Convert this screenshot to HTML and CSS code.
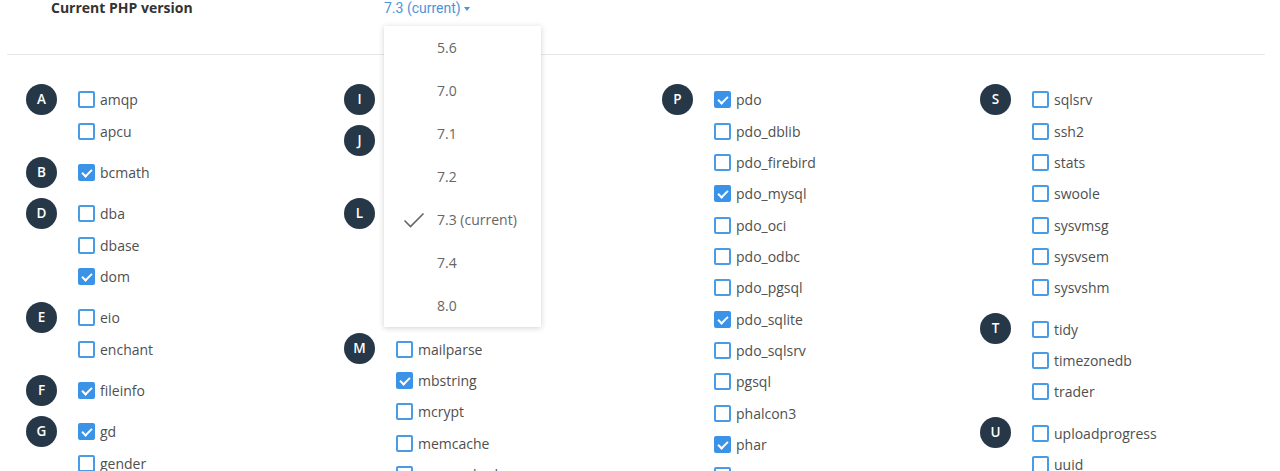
FILE: index.html
```html
<!DOCTYPE html>
<html lang="en">
<head>
    <meta charset="UTF-8">
    <title>PHP Selector - Extensions</title>
    <link rel="stylesheet" href="styles.css">
</head>
<body>
    <div class="version-row">
        <div class="version-label">Current PHP version</div>
        <div class="version-value">
            <span class="version-toggle">7.3 (current)<span class="caret"></span></span>
            <ul class="version-menu">
                <li>5.6</li>
                <li>7.0</li>
                <li>7.1</li>
                <li>7.2</li>
                <li class="selected">
                    <svg class="tick" width="22" height="16" viewBox="0 0 22 16"><path d="M1.5 8.5 L7.5 14.5 L20.5 1.5" fill="none" stroke="#666" stroke-width="1.6"/></svg>
                    7.3 (current)
                </li>
                <li>7.4</li>
                <li>8.0</li>
            </ul>
        </div>
    </div>

    <hr class="divider">

    <div class="ext-grid">
        <div class="ext-col">
            <div class="ext-group">
                <span class="letter">A</span>
                <ul class="ext-list">
                    <li><span class="box"></span>amqp</li>
                    <li><span class="box"></span>apcu</li>
                </ul>
            </div>
            <div class="ext-group">
                <span class="letter">B</span>
                <ul class="ext-list">
                    <li><span class="box on"></span>bcmath</li>
                </ul>
            </div>
            <div class="ext-group">
                <span class="letter">D</span>
                <ul class="ext-list">
                    <li><span class="box"></span>dba</li>
                    <li><span class="box"></span>dbase</li>
                    <li><span class="box on"></span>dom</li>
                </ul>
            </div>
            <div class="ext-group">
                <span class="letter">E</span>
                <ul class="ext-list">
                    <li><span class="box"></span>eio</li>
                    <li><span class="box"></span>enchant</li>
                </ul>
            </div>
            <div class="ext-group">
                <span class="letter">F</span>
                <ul class="ext-list">
                    <li><span class="box on"></span>fileinfo</li>
                </ul>
            </div>
            <div class="ext-group">
                <span class="letter">G</span>
                <ul class="ext-list">
                    <li><span class="box on"></span>gd</li>
                    <li><span class="box"></span>gender</li>
                    <li><span class="box"></span>geoip</li>
                </ul>
            </div>
        </div>

        <div class="ext-col">
            <div class="ext-group">
                <span class="letter">I</span>
                <ul class="ext-list">
                    <li><span class="box"></span>imap</li>
                </ul>
            </div>
            <div class="ext-group">
                <span class="letter">J</span>
                <ul class="ext-list">
                    <li><span class="box"></span>jsmin</li>
                    <li><span class="box"></span>json</li>
                </ul>
            </div>
            <div class="ext-group">
                <span class="letter">L</span>
                <ul class="ext-list">
                    <li><span class="box"></span>ldap</li>
                    <li><span class="box"></span>leveldb</li>
                    <li><span class="box"></span>lzf</li>
                    <li><span class="box"></span>lua</li>
                </ul>
            </div>
            <div class="ext-group">
                <span class="letter">M</span>
                <ul class="ext-list">
                    <li><span class="box"></span>mailparse</li>
                    <li><span class="box on"></span>mbstring</li>
                    <li><span class="box"></span>mcrypt</li>
                    <li><span class="box"></span>memcache</li>
                    <li><span class="box"></span>memcached</li>
                </ul>
            </div>
        </div>

        <div class="ext-col">
            <div class="ext-group">
                <span class="letter">P</span>
                <ul class="ext-list">
                    <li><span class="box on"></span>pdo</li>
                    <li><span class="box"></span>pdo_dblib</li>
                    <li><span class="box"></span>pdo_firebird</li>
                    <li><span class="box on"></span>pdo_mysql</li>
                    <li><span class="box"></span>pdo_oci</li>
                    <li><span class="box"></span>pdo_odbc</li>
                    <li><span class="box"></span>pdo_pgsql</li>
                    <li><span class="box on"></span>pdo_sqlite</li>
                    <li><span class="box"></span>pdo_sqlsrv</li>
                    <li><span class="box"></span>pgsql</li>
                    <li><span class="box"></span>phalcon3</li>
                    <li><span class="box on"></span>phar</li>
                    <li><span class="box"></span>posix</li>
                </ul>
            </div>
        </div>

        <div class="ext-col">
            <div class="ext-group">
                <span class="letter">S</span>
                <ul class="ext-list">
                    <li><span class="box"></span>sqlsrv</li>
                    <li><span class="box"></span>ssh2</li>
                    <li><span class="box"></span>stats</li>
                    <li><span class="box"></span>swoole</li>
                    <li><span class="box"></span>sysvmsg</li>
                    <li><span class="box"></span>sysvsem</li>
                    <li><span class="box"></span>sysvshm</li>
                </ul>
            </div>
            <div class="ext-group">
                <span class="letter">T</span>
                <ul class="ext-list">
                    <li><span class="box"></span>tidy</li>
                    <li><span class="box"></span>timezonedb</li>
                    <li><span class="box"></span>trader</li>
                </ul>
            </div>
            <div class="ext-group">
                <span class="letter">U</span>
                <ul class="ext-list">
                    <li><span class="box"></span>uploadprogress</li>
                    <li><span class="box"></span>uuid</li>
                </ul>
            </div>
        </div>
    </div>
</body>
</html>
```

FILE: styles.css
```css
body {
    margin: 0;
    height: 471px;
    overflow: hidden;
    background: #fff;
    font-family: "Open Sans", "Noto Sans", sans-serif;
    font-size: 14px;
    color: #4f4f4f;
}
ul {
    list-style: none;
    margin: 0;
    padding: 0;
}
.version-row {
    display: flex;
    padding-left: 51px;
    line-height: 16px;
}
.version-label {
    width: 333px;
    font-weight: bold;
    color: #333;
}
.version-value {
    position: relative;
}
.version-toggle {
    font-family: Roboto, sans-serif;
    font-size: 14px;
    color: #4a94dc;
}
.caret {
    display: inline-block;
    margin-left: 3px;
    vertical-align: 2px;
    border-left: 3.5px solid transparent;
    border-right: 3.5px solid transparent;
    border-top: 4px solid #4a94dc;
}
.version-menu {
    position: absolute;
    left: 0;
    top: 26px;
    width: 157px;
    background: #fff;
    box-shadow: 0 1px 6px rgba(0,0,0,0.18);
    z-index: 2;
}
.version-menu li {
    position: relative;
    height: 43px;
    line-height: 43px;
    padding-left: 53px;
    color: #666;
}
.version-menu .tick {
    position: absolute;
    left: 19px;
    top: 14px;
}
.divider {
    margin: 38px 15px 0 7px;
    border: 0;
    border-top: 1px solid #e8e8e8;
}
.ext-grid {
    display: grid;
    grid-template-columns: repeat(4, 318px);
    padding: 29px 0 0 26px;
}
.ext-group {
    display: flex;
    margin-bottom: 10px;
}
.letter {
    flex: none;
    width: 31px;
    height: 31px;
    border-radius: 50%;
    background: #263748;
    color: #fff;
    font-size: 13.5px;
    font-weight: 600;
    line-height: 31px;
    text-align: center;
}
.ext-list {
    margin-left: 21px;
}
.ext-list li {
    display: flex;
    align-items: center;
    height: 31.35px;
}
.box {
    box-sizing: border-box;
    width: 17px;
    height: 17px;
    margin-right: 5px;
    border: 2px solid #4a9be6;
    border-radius: 2px;
    position: relative;
}
.box.on {
    background: #3a93e6;
    border-color: #3a93e6;
}
.box.on::after {
    content: "";
    position: absolute;
    left: 4px;
    top: 1px;
    width: 4px;
    height: 8px;
    border: solid #fff;
    border-width: 0 2px 2px 0;
    transform: rotate(45deg);
}
```
